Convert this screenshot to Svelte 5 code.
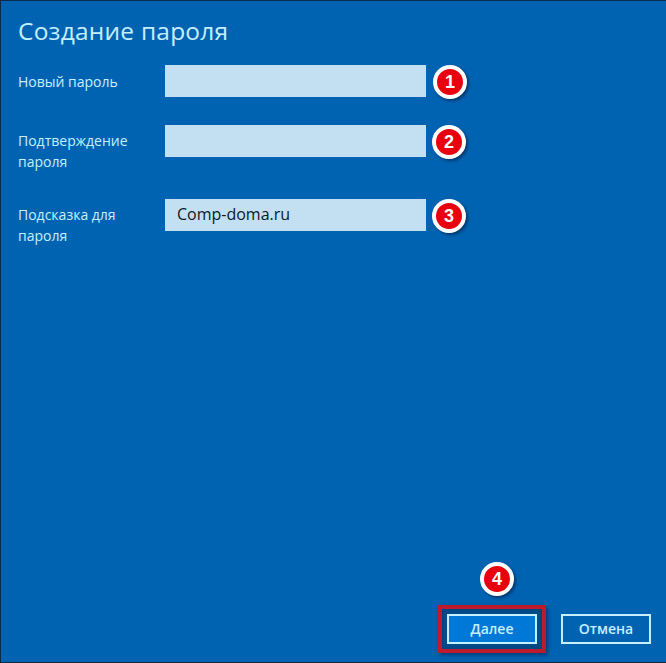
<script>
  const rows = [
    { label: 'Новый пароль', value: '', n: 1 },
    { label: 'Подтверждение пароля', value: '', n: 2 },
    { label: 'Подсказка для пароля', value: 'Comp-doma.ru', n: 3 }
  ];
</script>

<div class="page">
  <h1>Создание пароля</h1>
  <div class="form">
    {#each rows as r}
      <div class="row">
        <div class="label">{r.label}</div>
        <div class="field">{r.value}</div>
        <div class="badge">{r.n}</div>
      </div>
    {/each}
  </div>
  <div class="actions">
    <div class="next-wrap">
      <div class="badge four">4</div>
      <div class="frame"><button class="btn primary">Далее</button></div>
    </div>
    <button class="btn">Отмена</button>
  </div>
</div>

<style>
  :global(body) { margin: 0; background: #0063b1; }
  .page {
    box-sizing: border-box;
    width: 666px;
    height: 663px;
    background: #0063b1;
    border: 1px solid #0a2a4a;
    border-width: 1px 0 1px 1px;
    padding: 14px 0 0 17px;
    display: flex;
    flex-direction: column;
    font-family: "Open Sans", "Noto Sans", sans-serif;
    color: #c6f0ff;
  }
  h1 {
    margin: 0;
    font-size: 24.5px;
    line-height: 32px;
    font-weight: 400;
    letter-spacing: 0.22px;
    color: #c4efff;
  }
  .form { display: flex; flex-direction: column; margin-top: 18px; }
  .row { display: flex; align-items: flex-start; height: 74px; }
  .row:first-child { height: 60px; }
  .row:first-child .label { padding-top: 7px; }
  .label {
    width: 147px;
    padding-top: 6px;
    font-size: 14px;
    line-height: 20.5px;
    box-sizing: border-box;
  }
  .field {
    box-sizing: border-box;
    width: 261px;
    height: 32px;
    background: #c2e0f1;
    color: #0c1a24;
    font-size: 16px;
    line-height: 31px;
    padding-left: 12px;
  }
  .badge {
    box-sizing: border-box;
    width: 34px;
    height: 34px;
    margin-left: 6px;
    border-radius: 50%;
    background: #e8000f;
    border: 4px solid #fff;
    box-shadow: 2px 2px 3px rgba(0, 30, 70, 0.6);
    color: #fff;
    font: 700 18px/26px "Liberation Sans", sans-serif;
    text-align: center;
  }
  .row:first-child .badge { margin-left: 7px; }
  .actions {
    margin-top: auto;
    display: flex;
    justify-content: flex-end;
    align-items: flex-end;
    gap: 24px;
    padding: 0 15px 18px 0;
  }
  .next-wrap { position: relative; width: 90px; height: 30px; }
  .frame {
    position: absolute;
    left: -9px;
    top: -9px;
    width: 108px;
    height: 48px;
    box-sizing: border-box;
    border: 4px solid #bd1a2e;
    padding: 5px;
    box-shadow: 2px 2px 4px rgba(0, 20, 60, 0.5), inset 0 0 6px rgba(0, 20, 60, 0.35);
    background: #00508f;
  }
  .four { position: absolute; left: 33px; top: -52px; margin: 0; }
  .btn {
    box-sizing: border-box;
    display: block;
    width: 90px;
    height: 30px;
    padding: 0;
    background: #0063b1;
    border: 2px solid #c6f0ff;
    color: #c6f0ff;
    font: 600 14px/26px "Open Sans", sans-serif;
  }
  .primary { background: #0078d7; }
</style>
